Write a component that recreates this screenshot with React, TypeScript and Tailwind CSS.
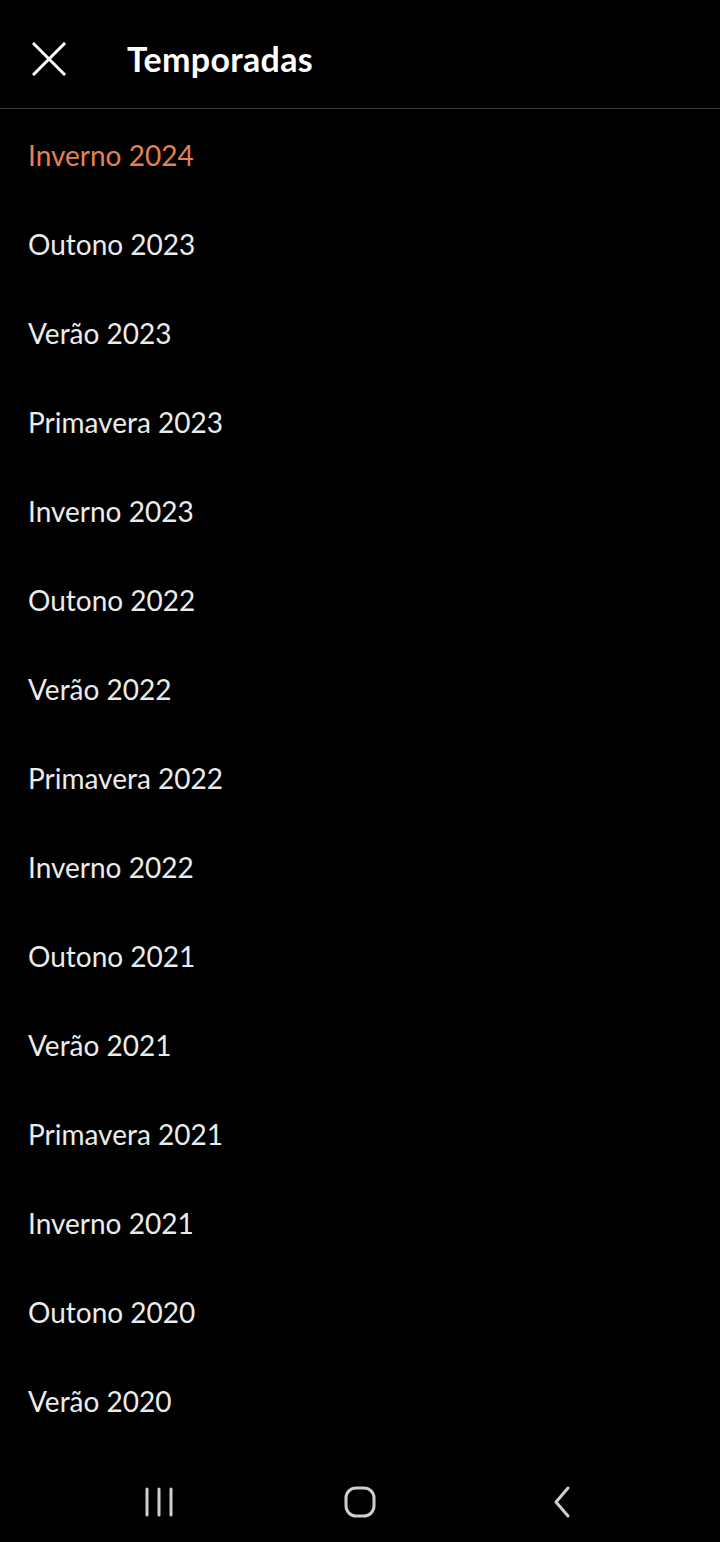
import React from 'react'

const seasons = [
  'Inverno 2024',
  'Outono 2023',
  'Verão 2023',
  'Primavera 2023',
  'Inverno 2023',
  'Outono 2022',
  'Verão 2022',
  'Primavera 2022',
  'Inverno 2022',
  'Outono 2021',
  'Verão 2021',
  'Primavera 2021',
  'Inverno 2021',
  'Outono 2020',
  'Verão 2020',
]

export default function App() {
  return (
    <div
      className="w-[720px] h-[1542px] bg-black flex flex-col overflow-hidden"
      style={{ fontFamily: 'Lato, "Open Sans", sans-serif' }}
    >
      {/* Header */}
      <div className="h-[109px] shrink-0 flex items-center pt-[10px] border-b border-[#3a3a3a]">
        <button className="w-[98px] flex items-center justify-center">
          <svg width="34" height="34" viewBox="0 0 34 34" fill="none">
            <path d="M2 2L32 32M32 2L2 32" stroke="#ffffff" strokeWidth="3" strokeLinecap="square" />
          </svg>
        </button>
        <h1 className="ml-[29px] text-[34px] font-bold text-white leading-none tracking-[0.3px]">Temporadas</h1>
      </div>

      {/* List */}
      <div className="flex-1 overflow-hidden flex flex-col">
        {seasons.map((s, i) => (
          <div key={s} className="h-[89px] shrink-0 flex items-center pl-[28px] pt-[3px]">
            <span className={`text-[28px] ${i === 0 ? 'text-[#e5804f]' : 'text-[#ebebeb]'}`}>{s}</span>
          </div>
        ))}
      </div>

      {/* Android nav bar */}
      <div className="h-[80px] shrink-0 bg-black flex items-center justify-between px-[142px]">
        <svg width="34" height="32" viewBox="0 0 34 32" fill="none">
          <path d="M5 3V29M17 3V29M29 3V29" stroke="#cfcfcf" strokeWidth="3" strokeLinecap="round" />
        </svg>
        <svg width="34" height="34" viewBox="0 0 34 34" fill="none">
          <rect x="3" y="3" width="28" height="28" rx="10" stroke="#cfcfcf" strokeWidth="3" />
        </svg>
        <svg width="34" height="34" viewBox="0 0 34 34" fill="none">
          <path d="M24 3L12 17L24 31" stroke="#cfcfcf" strokeWidth="3" strokeLinecap="round" strokeLinejoin="round" />
        </svg>
      </div>
    </div>
  )
}
